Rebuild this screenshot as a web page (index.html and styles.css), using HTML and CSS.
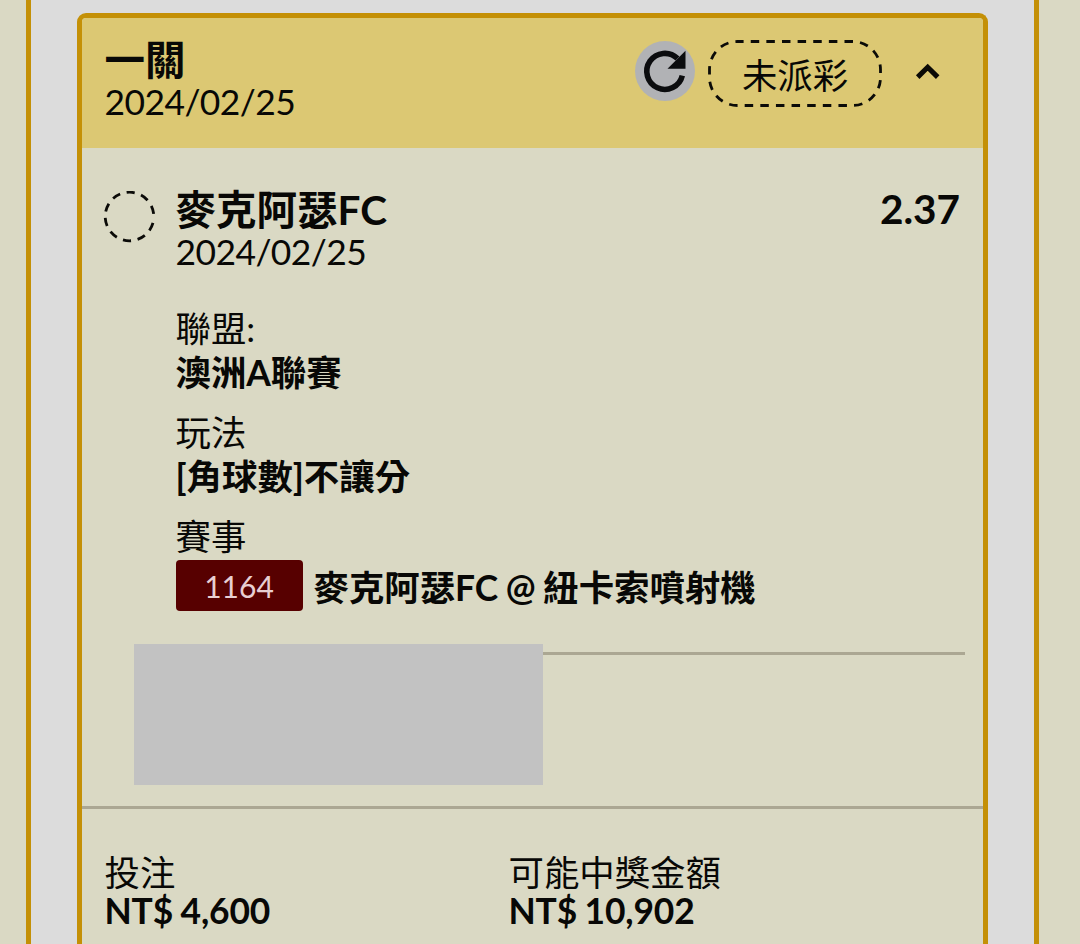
FILE: index.html
```html
<!DOCTYPE html>
<html lang="zh-Hant">
<head>
    <meta charset="UTF-8">
    <meta name="viewport" content="width=device-width, initial-scale=1.0">
    <title>投注紀錄</title>
    <link rel="stylesheet" href="styles.css">
</head>
<body>
    <div class="panel">
        <div class="card">
            <!-- Header -->
            <div class="card-header">
                <div class="header-info">
                    <div class="title">一關</div>
                    <div class="date">2024/02/25</div>
                </div>
                <div class="refresh">
                    <svg width="60" height="60" viewBox="0 0 60 60">
                        <path d="M47.3 34.6A18 18 0 1 1 42.5 17.6" fill="none" stroke="#0b0c0e" stroke-width="5.6"/>
                        <path d="M50.5 9.7v18h-18z" fill="#0b0c0e"/>
                    </svg>
                </div>
                <div class="status">
                    <svg class="status-outline" width="174" height="67" viewBox="0 0 174 67">
                        <rect x="1.5" y="1.5" width="171" height="64" rx="28" stroke-dasharray="8.5 7.127" stroke-dashoffset="2.4"/>
                    </svg>
                    <span>未派彩</span>
                </div>
                <svg class="chevron" width="26" height="18" viewBox="0 0 26 18">
                    <path d="M2.7 15.1L12.7 5.2L22.7 15.1" fill="none" stroke="#0b0a06" stroke-width="5"/>
                </svg>
            </div>

            <!-- Selection -->
            <div class="selection">
                <svg class="marker" width="52" height="52" viewBox="0 0 52 52">
                    <circle cx="26.5" cy="25.5" r="24.3" stroke-dasharray="8.3 6.6" stroke-dashoffset="-6.5"/>
                </svg>
                <div class="details">
                    <div class="team-row">
                        <div class="title">麥克阿瑟FC</div>
                        <div class="odds">2.37</div>
                    </div>
                    <div class="date">2024/02/25</div>

                    <div class="field first">
                        <div class="label">聯盟:</div>
                        <div class="value">澳洲A聯賽</div>
                    </div>
                    <div class="field">
                        <div class="label">玩法</div>
                        <div class="value">[角球數]不讓分</div>
                    </div>
                    <div class="field">
                        <div class="label">賽事</div>
                        <div class="match">
                            <span class="match-no">1164</span>
                            <span class="value">麥克阿瑟FC @ 紐卡索噴射機</span>
                        </div>
                    </div>
                </div>
            </div>

            <div class="extra">
                <div class="block"></div>
                <div class="line"></div>
            </div>

            <!-- Amounts -->
            <div class="card-footer">
                <div class="amount">
                    <div class="label">投注</div>
                    <div class="value">NT$ 4,600</div>
                </div>
                <div class="amount">
                    <div class="label">可能中獎金額</div>
                    <div class="value">NT$ 10,902</div>
                </div>
            </div>
        </div>
    </div>
</body>
</html>
```
FILE: styles.css
```css
* {
    box-sizing: border-box;
}

body {
    margin: 0;
    height: 944px;
    background-color: #dad9c4;
    color: #080806;
    font-family: Lato, "Noto Sans CJK TC", sans-serif;
    font-size: 35.4px;
    line-height: 43px;
}

.panel {
    height: 100%;
    margin: 0 41px 0 25.5px;
    padding: 13px 46px 0;
    background-color: #dcdcdc;
    border-left: 5px solid #c49006;
    border-right: 5px solid #c49006;
}

.card {
    height: 100%;
    background-color: #dad9c4;
    border: 5px solid #c49006;
    border-bottom: none;
    border-radius: 9px 9px 0 0;
}

.title {
    font-size: 40.5px;
    font-weight: bold;
    line-height: 42px;
}

.date {
    letter-spacing: -0.55px;
}

/* Header */
.card-header {
    display: flex;
    align-items: flex-start;
    height: 130px;
    padding: 21px 42px 0 23px;
    background-color: #dcc873;
    border-radius: 4px 4px 0 0;
}

.header-info {
    flex: 1;
}

.header-info .date {
    line-height: 41px;
}

.refresh {
    width: 60px;
    height: 60px;
    margin: 2px 13px 0 0;
    border-radius: 50%;
    background-color: #b1b2b5;
}

.refresh svg {
    display: block;
}

.status {
    position: relative;
    width: 174px;
    height: 67px;
    margin: 1px 33px 0 0;
    line-height: 72px;
    text-align: center;
}

.status-outline {
    position: absolute;
    top: 0;
    left: 0;
}

.status-outline rect, .marker circle {
    fill: none;
    stroke: #0b0b08;
    stroke-width: 2.8;
}

.chevron {
    margin-top: 23px;
}

/* Selection */
.selection {
    display: flex;
    padding: 41px 23px 0 20.5px;
}

.marker {
    margin: 2px 21px 0 0.5px;
}

.details {
    flex: 1;
}

.details .date {
    line-height: 41px;
}

.team-row {
    display: flex;
    justify-content: space-between;
}

.odds {
    font-size: 40.5px;
    font-weight: bold;
    line-height: 40px;
}

.value {
    font-weight: bold;
    word-spacing: -1px;
}

.field {
    margin-top: 18px;
}

.field.first {
    margin-top: 35px;
}

.field .value {
    line-height: 46px;
    margin-bottom: -3px;
}

.match {
    display: flex;
    align-items: center;
    margin-top: 2px;
}

.match .value {
    margin-bottom: -4px;
}

.match-no {
    width: 127px;
    height: 51px;
    margin-right: 11px;
    background-color: #570000;
    border-radius: 4px;
    color: #e8cfd2;
    font-size: 30px;
    line-height: 53px;
    text-align: center;
}

/* Extra info */
.extra {
    display: flex;
    height: 141px;
    margin: 33px 18px 0 52px;
}

.block {
    width: 409px;
    background-color: #c2c2c2;
}

.line {
    flex: 1;
    height: 3px;
    margin-top: 8px;
    background-color: #aba793;
}

/* Footer */
.card-footer {
    display: flex;
    margin-top: 21px;
    padding: 45px 23px 0;
    border-top: 3px solid #aba793;
}

.amount {
    width: 404px;
    line-height: 38px;
}

.amount .value {
    letter-spacing: -0.15px;
}
```
